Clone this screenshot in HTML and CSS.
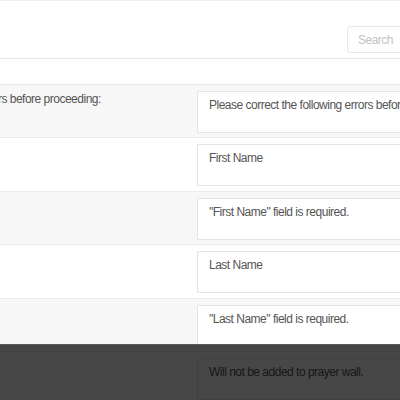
FILE: index.html
```html
<!DOCTYPE html>
<html>
<head>
<meta charset="utf-8">
<link rel="stylesheet" href="styles.css">
</head>
<body>
<div class="page">
  <header class="topbar">
    <input class="search" type="text" placeholder="Search">
  </header>
  <div class="subbar"></div>
  <div class="form-table">
    <div class="row alt">
      <div class="label">Please correct the following errors before proceeding:</div>
      <div class="field"><div class="box">Please correct the following errors before proceeding:</div></div>
    </div>
    <div class="row">
      <div class="label"></div>
      <div class="field"><div class="box">First Name</div></div>
    </div>
    <div class="row alt">
      <div class="label"></div>
      <div class="field"><div class="box">"First Name" field is required.</div></div>
    </div>
    <div class="row">
      <div class="label"></div>
      <div class="field"><div class="box">Last Name</div></div>
    </div>
    <div class="row alt">
      <div class="label"></div>
      <div class="field"><div class="box">"Last Name" field is required.</div></div>
    </div>
    <div class="row">
      <div class="label"></div>
      <div class="field"><div class="box">Will not be added to prayer wall.</div></div>
    </div>
  </div>
</div>
<div class="overlay"></div>
</body>
</html>
```

FILE: styles.css
```css
html, body {
  margin: 0;
  padding: 0;
  overflow: hidden;
  background: #fff;
  font-family: "Liberation Sans", Arial, sans-serif;
  font-size: 12px;
  letter-spacing: -0.5px;
  color: #555;
}

.page {
  width: 760px;
  margin-left: -250px;
}

.topbar {
  height: 59px;
  box-sizing: border-box;
  border-top: 1px solid #f0f0f0;
  border-bottom: 1px solid #e6e6e6;
  display: flex;
  align-items: flex-start;
  padding: 25px 0 0 597px;
}

.search {
  width: 150px;
  height: 27px;
  box-sizing: border-box;
  border: 1px solid #e8e8e8;
  border-radius: 3px;
  padding: 0 10px;
  margin: 0;
  font-family: "Liberation Sans", Arial, sans-serif;
  font-size: 12px;
  letter-spacing: -0.5px;
  color: #555;
  outline: none;
}

.search::placeholder {
  color: #c4c4c4;
}

.subbar {
  height: 25px;
  border-bottom: 1px solid #e6e6e6;
}

.row {
  display: flex;
  height: 52.4px;
  border-bottom: 1px solid #ebebeb;
  background: #fff;
}

.row.alt {
  background: #f7f7f7;
}

.label {
  flex: 0 0 447px;
  box-sizing: border-box;
  padding: 6px 8px 6px 93px;
  line-height: 16px;
  white-space: nowrap;
  overflow: hidden;
}

.field {
  flex: 1 1 auto;
  min-width: 0;
  padding-top: 6px;
}

.box {
  height: 42px;
  box-sizing: border-box;
  border: 1px solid #e4e4e4;
  background: #fff;
  padding: 4px 11px;
  line-height: 18px;
  white-space: nowrap;
  overflow: hidden;
}

.overlay {
  position: fixed;
  left: 0;
  right: 0;
  bottom: 0;
  height: 55px;
  background: rgba(0, 0, 0, 0.72);
  border-top: 1px solid #5a5a5a;
}
```
